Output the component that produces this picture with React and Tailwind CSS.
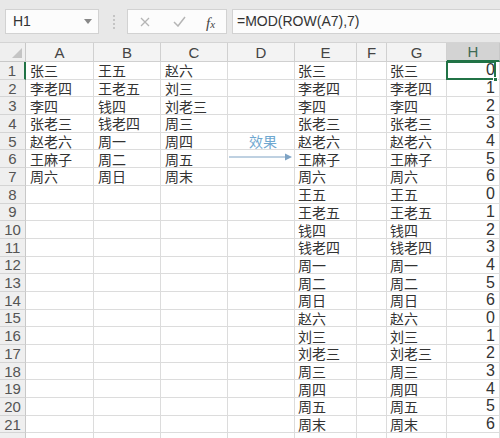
import React from "react";

const A = ["张三", "李老四", "李四", "张老三", "赵老六", "王麻子", "周六"];
const B = ["王五", "王老五", "钱四", "钱老四", "周一", "周二", "周日"];
const C = ["赵六", "刘三", "刘老三", "周三", "周四", "周五", "周末"];
const ALL = [...A, ...B, ...C];

const cols = ["A", "B", "C", "D", "E", "F", "G", "H"];

function Cell({ children, className = "" }) {
  return (
    <div
      className={
        "h-full border-r border-b border-[#dcdcdc] whitespace-nowrap leading-[14px] flex items-center " +
        className
      }
    >
      {children}
    </div>
  );
}

export default function App() {
  const rows = [];
  for (let r = 1; r <= 22; r++) {
    const i = r - 1;
    const a = r <= 7 ? A[i] : "";
    const b = r <= 7 ? B[i] : "";
    const c = r <= 7 ? C[i] : "";
    const e = r <= 21 ? ALL[i] : "";
    const h = r <= 21 ? String(i % 7) : "";
    rows.push(
      <React.Fragment key={r}>
        <div
          className={
            "h-full border-b border-[#d4d4d4] bg-[#efefef] flex items-center justify-center text-[15px] text-[#555] leading-none " +
            (r === 1 ? "border-r-2 border-r-[#217346] bg-[#e2e2e2]" : "border-r border-r-[#c8c8c8]")
          }
          style={{ fontFamily: "'Liberation Sans', Arial, sans-serif" }}
        >
          {r <= 21 ? r : ""}
        </div>
        <Cell className="pl-[4px]">{a}</Cell>
        <Cell className="pl-[4px]">{b}</Cell>
        <Cell className="pl-[4px]">{c}</Cell>
        <Cell></Cell>
        <Cell className="pl-[3px]">{e}</Cell>
        <Cell></Cell>
        <Cell className="pl-[3px]">{e}</Cell>
        <Cell className="justify-end pr-[4px] relative">
          <span
            className="text-[16px] text-[#333] leading-none"
            style={{ fontFamily: "'Liberation Sans', Arial, sans-serif" }}
          >
            {h}
          </span>
          {r === 1 && (
            <>
              <div className="absolute left-[-1px] top-[-1px] right-[3px] bottom-[-1px] border-2 border-[#217346] pointer-events-none" />
              <div className="absolute right-[1px] bottom-[-3px] w-[5px] h-[5px] bg-[#217346] border border-white" />
            </>
          )}
        </Cell>
      </React.Fragment>
    );
  }

  return (
    <div
      className="w-[500px] h-[438px] overflow-hidden bg-white relative text-[14px] text-[#333]"
      style={{ fontFamily: "'Noto Sans CJK SC', 'Noto Sans', sans-serif" }}
    >
      {/* toolbar */}
      <div className="h-[43px] bg-[#e8e8e8] flex items-start pt-[9px] border-b border-[#d4d4d4]">
        <div className="ml-[5px] w-[94px] h-[25px] bg-[#fcfcfc] border border-[#d2d2d2] flex items-center justify-between pl-[7px] pr-[6px]">
          <span
            className="text-[14px] text-[#333]"
            style={{ fontFamily: "'Liberation Sans', Arial, sans-serif" }}
          >
            H1
          </span>
          <svg width="8" height="5" viewBox="0 0 8 5">
            <path d="M0 0 L8 0 L4 5 Z" fill="#888" />
          </svg>
        </div>
        <div className="ml-[14px] mt-[6px] flex flex-col gap-[2px]">
          {[0, 1, 2, 3].map((k) => (
            <div key={k} className="w-[2px] h-[2px] bg-[#c4c4c4]" />
          ))}
        </div>
        <div className="ml-[12px] w-[100px] h-[25px] bg-[#fcfcfc] border border-[#d2d2d2] flex items-center relative">
          <svg className="absolute left-[12px] top-[7px]" width="10" height="10" viewBox="0 0 10 10">
            <path d="M1 1 L9 9 M9 1 L1 9" stroke="#b5b5b5" strokeWidth="1.3" />
          </svg>
          <svg className="absolute left-[45px] top-[6px]" width="13" height="11" viewBox="0 0 13 11">
            <path d="M1 6 L5 10 L12 1" stroke="#b5b5b5" strokeWidth="1.5" fill="none" />
          </svg>
          <span
            className="absolute left-[78px] top-[2px] text-[15px] italic text-[#444]"
            style={{ fontFamily: "'Liberation Serif', 'Times New Roman', serif" }}
          >
            f<span className="text-[11px]">x</span>
          </span>
        </div>
        <div className="ml-[5px] flex-1 h-[25px] bg-[#fcfcfc] border border-[#d2d2d2] border-r-0 flex items-center pl-[4px]">
          <span
            className="text-[14px] text-[#333]"
            style={{ fontFamily: "'Liberation Sans', Arial, sans-serif" }}
          >
            =MOD(ROW(A7),7)
          </span>
        </div>
      </div>

      {/* grid */}
      <div className="grid grid-cols-[26px_68px_67px_67px_67px_62px_30px_60px_53px] grid-rows-[19px_repeat(22,17.7px)]">
        <div className="h-full bg-[#efefef] border-r border-b border-[#c8c8c8] relative">
          <svg className="absolute right-[3px] bottom-[3px]" width="10" height="10" viewBox="0 0 10 10">
            <path d="M10 0 L10 10 L0 10 Z" fill="#c4c4c4" />
          </svg>
        </div>
        {cols.map((c) => (
          <div
            key={c}
            className={
              "h-full flex items-center justify-center text-[15px] leading-none border-r " +
              (c === "H"
                ? "bg-[#d3d3d3] text-[#3d6b55] border-b-2 border-b-[#217346] border-r-[#c8c8c8]"
                : "bg-[#f3f3f3] text-[#444] border-b border-[#d0d0d0]")
            }
            style={{ fontFamily: "'Liberation Sans', Arial, sans-serif" }}
          >
            {c}
          </div>
        ))}
        {rows}
      </div>

      {/* annotation arrow */}
      <div className="absolute left-[249px] top-[134px] text-[14px] text-[#6fa8d0] leading-none">
        效果
      </div>
      <svg className="absolute left-[228px] top-[152px]" width="66" height="10" viewBox="0 0 66 10">
        <path d="M1 5 L58 5" stroke="#7ea3c4" strokeWidth="1" />
        <path d="M57 1.5 L64 5 L57 8.5 Z" fill="#7ea3c4" />
      </svg>
    </div>
  );
}
